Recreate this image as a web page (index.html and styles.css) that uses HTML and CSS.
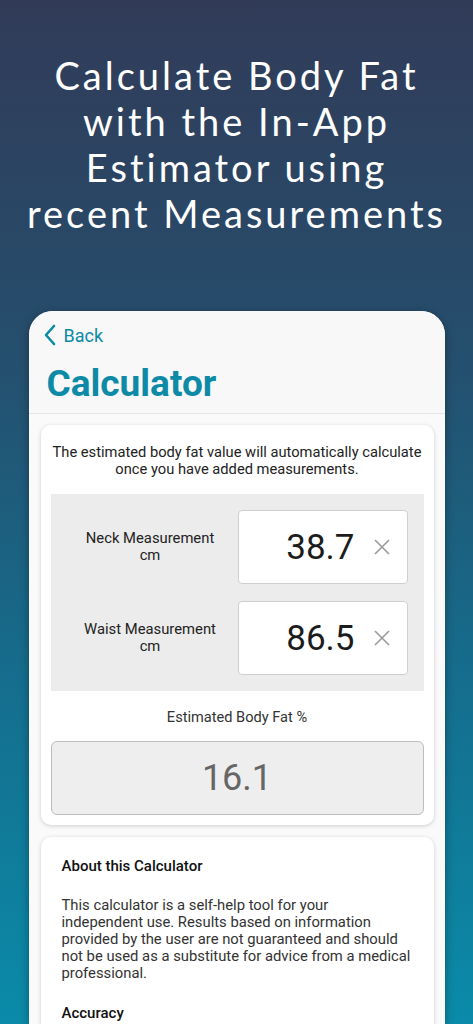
FILE: index.html
```html
<!DOCTYPE html>
<html lang="en">
<head>
  <meta charset="UTF-8" />
  <meta name="viewport" content="width=device-width, initial-scale=1.0" />
  <title>Body Fat Calculator</title>
  <link rel="stylesheet" href="styles.css">
</head>
<body>

  <div class="screen">
    <!-- Promo headline -->
    <h1 class="headline">Calculate Body Fat<br>with the In-App<br>Estimator using<br>recent Measurements</h1>

    <!-- Phone mockup -->
    <div class="phone">
      <div class="app-header">
        <a href="#" class="back-link">
          <svg width="14" height="22" viewBox="0 0 14 22"><path d="M11 2 L3 11 L11 20" fill="none" stroke="currentColor" stroke-width="2.6" stroke-linecap="round" stroke-linejoin="round"/></svg>
          Back
        </a>
        <h2 class="page-title">Calculator</h2>
      </div>

      <div class="app-content">
        <div class="card">
          <p class="intro">The estimated body fat value will automatically calculate once you have added measurements.</p>

          <div class="inputs-panel">
            <div class="input-row">
              <label class="input-label">Neck Measurement<br>cm</label>
              <div class="input-box">
                <span class="input-value">38.7</span>
                <svg class="clear-btn" width="16" height="16" viewBox="0 0 16 16"><path d="M1 1 L15 15 M15 1 L1 15" stroke="currentColor" stroke-width="1.6"/></svg>
              </div>
            </div>
            <div class="input-row">
              <label class="input-label">Waist Measurement<br>cm</label>
              <div class="input-box">
                <span class="input-value">86.5</span>
                <svg class="clear-btn" width="16" height="16" viewBox="0 0 16 16"><path d="M1 1 L15 15 M15 1 L1 15" stroke="currentColor" stroke-width="1.6"/></svg>
              </div>
            </div>
          </div>

          <div class="result-label">Estimated Body Fat %</div>
          <div class="result-box">16.1</div>
        </div>

        <div class="card about">
          <h3>About this Calculator</h3>
          <p>This calculator is a self-help tool for your<br>independent use. Results based on information provided by the user are not guaranteed and should not be used as a substitute for advice from a medical professional.</p>
          <h3>Accuracy</h3>
        </div>
      </div>
    </div>
  </div>

</body>
</html>
```

FILE: styles.css
```css
body {
  margin: 0;
  padding: 0;
  font-family: Roboto, "Liberation Sans", sans-serif;
}

.screen {
  width: 473px;
  height: 1024px;
  overflow: hidden;
  background: linear-gradient(180deg, #313b58 0%, #254f6e 35%, #166c8c 65%, #0a8ba9 100%);
  display: flex;
  flex-direction: column;
  align-items: center;
}

/* Headline */
.headline {
  margin: 52px 0 0;
  width: 470px;
  color: #ffffff;
  font-family: Lato, sans-serif;
  font-weight: 400;
  font-size: 38px;
  line-height: 46px;
  text-align: center;
  letter-spacing: 3px;
  white-space: nowrap;
}

/* Phone */
.phone {
  margin-top: 75px;
  width: 416px;
  flex-grow: 1;
  background: #fafafa;
  border-radius: 24px 24px 0 0;
  box-shadow: 0 2px 8px rgba(0, 0, 0, 0.35);
  overflow: hidden;
}

.app-header {
  background: #f8f8f8;
  border-bottom: 1px solid #e6e6e6;
  padding: 12px 18px 8px 18px;
}

.back-link {
  display: flex;
  align-items: center;
  gap: 7px;
  color: #0d8aa6;
  text-decoration: none;
  font-size: 18px;
  height: 24px;
  margin-left: -4px;
}

.page-title {
  margin: 16px 0 0;
  color: #0d8aa6;
  font-size: 37px;
  font-weight: 700;
  line-height: 42px;
}

.app-content {
  padding: 11px 11px 0 12px;
}

.card {
  background: #ffffff;
  border-radius: 10px;
  box-shadow: 0 1px 4px rgba(0, 0, 0, 0.18);
  padding: 19px 10px 10px;
  margin-bottom: 12px;
}

.intro {
  margin: 0 -4px 16px;
  font-size: 14.7px;
  line-height: 17px;
  color: #222;
  text-align: center;
}

.inputs-panel {
  background: #ececec;
  padding: 16px 16px 16px 0;
  display: flex;
  flex-direction: column;
  gap: 17px;
}

.input-row {
  display: flex;
  align-items: center;
}

.input-label {
  box-sizing: border-box;
  width: 187px;
  padding-left: 12px;
  text-align: center;
  font-size: 14.8px;
  line-height: 17px;
  color: #222;
}

.input-box {
  flex-grow: 1;
  height: 72px;
  background: #ffffff;
  border: 1px solid #cfcfcf;
  border-radius: 4px;
  display: flex;
  align-items: center;
  justify-content: flex-end;
  padding-right: 17px;
}

.input-value {
  font-size: 35px;
  color: #1c1c1c;
  margin-right: 19px;
}

.clear-btn {
  color: #9a9a9a;
}

.result-label {
  text-align: center;
  font-size: 14.6px;
  color: #333;
  margin: 17px 0 15px;
}

.result-box {
  height: 72px;
  background: #eeeeee;
  border: 1px solid #bdbdbd;
  border-radius: 6px;
  display: flex;
  align-items: center;
  justify-content: center;
  font-size: 36px;
  color: #666;
}

/* About card */
.card.about {
  padding: 20px 14px 20px 21px;
}

.about h3 {
  margin: 0;
  font-size: 15px;
  font-weight: 500;
  color: #111;
}

.about p {
  margin: 22px 0 22px;
  font-size: 14.8px;
  line-height: 17px;
  color: #333;
}
```
